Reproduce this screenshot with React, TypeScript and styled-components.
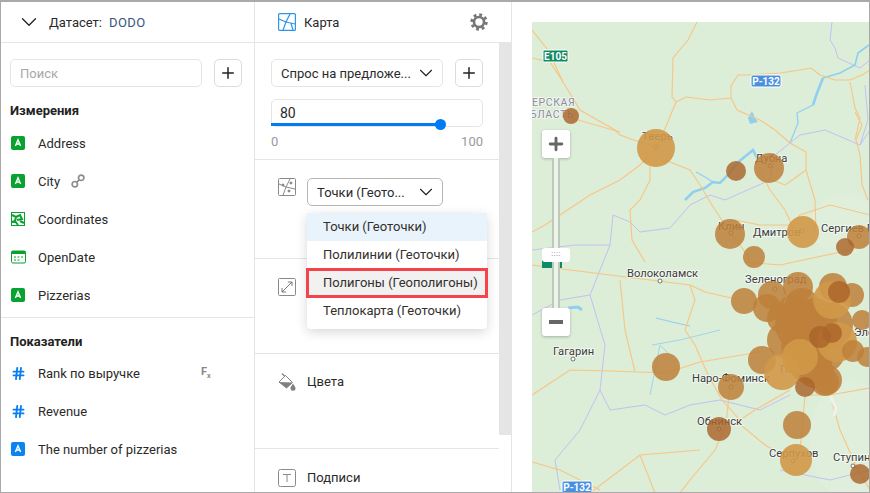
import styled, { createGlobalStyle } from 'styled-components';
import { ChevronDown, Plus, Hash } from 'lucide-react';

const GlobalStyle = createGlobalStyle`
  html, body {
    margin: 0;
    padding: 0;
    background: #fff;
  }
  * {
    box-sizing: border-box;
  }
`;

const roads = [
  'M656 148 L667 124 L676 102 L672 97 L673 58 L688 40 L697 22',
  'M676 102 L686 97 L710 100 L731 98 L731 86 L738 75 L752 75 L780 73 L800 70 L811 68 L820 75 L835 80 L850 80 L862 75 L870 70',
  'M731 98 L737 110 L760 120 L775 130 L790 143 L806 152 L806 170 L795 178 L785 185 L772 180',
  'M532 30 L548 50 L563 82 L571 95 L580 110 L615 130 L620 135 L656 148',
  'M532 58 L550 62 L563 82',
  'M571 118 L620 132',
  'M656 148 L640 165 L620 180 L590 195 L560 215 L545 225 L532 232',
  'M650 165 L650 180 L640 200 L630 210 L632 240 L645 262',
  'M665 160 L690 170 L700 185 L712 205 L725 225 L740 245 L754 265',
  'M850 82 L855 108 L860 118 L855 140',
  'M855 112 L862 125 L856 140 L860 155 L862 185 L868 200',
  'M806 170 L815 200 L816 232',
  'M760 170 L770 190 L785 210 L795 232',
  'M735 220 L760 225 L790 225 L800 215 L830 205 L870 215',
  'M532 265 L570 270 L610 275 L650 280 L690 285 L705 292 L740 300',
  'M620 280 L625 330 L635 372',
  'M532 395 L570 370 L610 371 L666 373 L700 362 L760 352',
  'M690 285 L695 300 L685 330 L695 345 L708 375 L722 400 L740 420 L755 410 L790 390',
  'M730 385 L726 425 L715 450 L690 480 L680 493',
  'M532 462 L560 470 L600 490',
  'M590 493 L640 455 L700 450',
  'M640 455 L655 493',
  'M735 420 L765 445 L790 460',
  'M805 395 L802 430 L800 450',
  'M830 395 L840 430 L858 470 L870 490',
  'M745 262 L780 265 L850 250 L870 240',
  'M805 395 L830 395 L870 388',
];

const borders = [
  'M832 22 L830 40 L835 48 L838 58 L860 68 L870 60',
  'M532 250 L575 245 L610 245 L613 215 L630 222 L640 232 L670 228 L690 205 L710 195 L725 200 L770 180 L775 155 L800 135 L825 130 L860 145 L870 130',
  'M865 85 L868 120 L860 145',
  'M610 245 L600 270 L590 295 L605 345 L600 390 L610 410 L645 405 L665 415 L690 405 L720 400 L760 410 L790 395',
  'M590 295 L560 300 L532 315',
  'M600 390 L580 430 L555 460 L560 490',
  'M780 470 L830 480 L870 470',
];

const rivers: [string, number][] = [
  ['M685 200 L693 192 L705 188 L713 182 L720 183 L730 173 L737 163 L747 155 L753 150 L757 158', 2.5],
  ['M696 172 L705 177 L713 182', 1.2],
  ['M869 45 L858 53 L855 65 L840 73 L823 78', 1.6],
  ['M823 78 L817 93 L813 105', 2.6],
  ['M813 105 L797 113 L798 123 L790 143', 1.2],
  ['M568 308 L578 307 L582 310', 3],
  ['M656 318 L672 322 L690 326', 1.2],
  ['M652 345 L680 340 L720 330', 0.8],
  ['M650 395 L660 345 L670 355', 0.8],
];

type Bubble = [number, number, number, string];

const LIGHT = 'rgba(208, 152, 72, 0.9)';
const MID = 'rgba(190, 128, 58, 0.86)';
const DARK = 'rgba(170, 100, 42, 0.82)';

const bubbles: Bubble[] = [
  [571, 116, 8, DARK],
  [656, 148, 19, LIGHT],
  [736, 171, 10, DARK],
  [769, 168, 15, MID],
  [730, 234, 15, MID],
  [803, 232, 16, LIGHT],
  [859, 237, 12, MID],
  [845, 247, 9, DARK],
  [754, 257, 11, MID],
  [744, 301, 13, MID],
  [767, 308, 14, MID],
  [772, 295, 14, MID],
  [798, 287, 15, MID],
  [833, 287, 14, MID],
  [852, 295, 12, MID],
  [862, 320, 10, MID],
  [795, 312, 18, MID],
  [802, 305, 17, MID],
  [785, 340, 18, MID],
  [830, 325, 23, MID],
  [810, 332, 24, MID],
  [800, 325, 25, MID],
  [815, 320, 22, MID],
  [782, 318, 15, MID],
  [825, 352, 20, MID],
  [805, 345, 24, MID],
  [815, 370, 18, MID],
  [810, 362, 22, MID],
  [805, 315, 12, MID],
  [762, 360, 14, MID],
  [782, 372, 18, LIGHT],
  [827, 380, 15, MID],
  [825, 382, 14, MID],
  [805, 387, 10, DARK],
  [800, 357, 18, LIGHT],
  [837, 342, 20, LIGHT],
  [820, 337, 11, DARK],
  [832, 333, 10, DARK],
  [832, 300, 19, LIGHT],
  [839, 292, 11, DARK],
  [853, 351, 11, MID],
  [867, 357, 10, MID],
  [666, 367, 14, MID],
  [731, 387, 13, MID],
  [719, 429, 12, DARK],
  [797, 425, 14, MID],
  [796, 460, 16, LIGHT],
  [860, 474, 10, DARK],
];

const placeDots = [
  [656, 147], [770, 166], [731, 233], [802, 231], [859, 236], [660, 281], [573, 359], [731, 387], [719, 429], [793, 461], [853, 466], [775, 289],
];

const mapLabels: [string, number, number, number?][] = [
  ['ЕРСКАЯ', 532, 106, 1],
  ['БЛАСТЬ', 530, 118, 1],
  ['Тверь', 642, 140],
  ['Дубна', 755, 162],
  ['Клин', 718, 230],
  ['Дмитров', 753, 236],
  ['Сергиев П', 821, 232],
  ['Волоколамск', 627, 277],
  ['Зеленоград', 745, 283],
  ['Гагарин', 553, 355],
  ['Наро-Фоминск', 692, 382],
  ['Обнинск', 697, 425],
  ['Серпухов', 769, 457],
  ['Ступин', 833, 461],
  ['По', 780, 373],
  ['Эле', 854, 336],
];

const MapDrawing = () => (
  <MapSvg viewBox="532 22 338 471">
    <rect x="532" y="22" width="338" height="471" fill="#dcedd8" />
    <ellipse cx="850" cy="440" rx="40" ry="60" fill="#e0efdc" />
    <ellipse cx="845" cy="225" rx="35" ry="30" fill="#e0efdc" />
    {borders.map(d => (
      <path key={d} d={d} fill="none" stroke="#c6bff3" strokeWidth="1" />
    ))}
    {rivers.map(([d, w]) => (
      <path key={d} d={d} fill="none" stroke="#8fcff0" strokeWidth={w} />
    ))}
    <path d="M748 118 L752 111 L755 118 L758 122 L750 124 Z" fill="#8fcff0" />
    {roads.map(d => (
      <path key={d} d={d} fill="none" stroke="#f8c583" strokeWidth="1.1" />
    ))}
    <path d="M830 396 L836 408 L834 416" fill="none" stroke="#eef3ea" strokeWidth="3" />
    <rect x="543" y="50" width="25" height="12" rx="1.5" fill="#0f8a64" stroke="#fff" strokeWidth="1" />
    <MapShield x="555.5" y="59.5">E105</MapShield>
    <rect x="751" y="75" width="30" height="12" rx="2" fill="#4a90e2" stroke="#fff" strokeWidth="1" />
    <MapShield x="766" y="84.5">Р-132</MapShield>
    <rect x="562" y="481" width="30" height="12" rx="2" fill="#4a90e2" stroke="#fff" strokeWidth="1" />
    <MapShield x="577" y="490.5">Р-132</MapShield>
    <rect x="542" y="260" width="20" height="8" fill="#0f8a64" />
    {mapLabels.map(([label, x, y, region]) => (
      <MapLabel key={label} x={x} y={y} $region={!!region}>
        {label}
      </MapLabel>
    ))}
    {placeDots.map(([x, y]) => (
      <circle key={`${x}-${y}`} cx={x} cy={y} r="2" fill="#fff" stroke="#555" strokeWidth="0.8" />
    ))}
    {bubbles.map(([x, y, r, fill]) => (
      <circle key={`${x}-${y}-${r}`} cx={x} cy={y} r={r} fill={fill} />
    ))}
  </MapSvg>
);

const TypeA = ({ color }: { color: string }) => (
  <svg width="14" height="14" viewBox="0 0 14 14">
    <rect width="14" height="14" rx="2" fill={color} />
    <path d="M4.4 10 L7 3.8 L9.6 10 M5.3 8 H8.7" fill="none" stroke="#fff" strokeWidth="1.4" />
  </svg>
);

const GeoIcon = () => (
  <svg width="14" height="14" viewBox="0 0 14 14" fill="none" stroke="#07a22f">
    <rect x="0.5" y="0.5" width="13" height="13" />
    <path d="M1 3 L5 5 L4 9 L1 10 M5 5 L9 3 L11 7 L6 8 M9 9 L13 11 M4 9 L7 13" strokeWidth="2" />
  </svg>
);

const DateIcon = () => (
  <svg width="15" height="14" viewBox="0 0 15 14" fill="none">
    <rect x="0.5" y="1" width="14" height="12" rx="1.5" stroke="#07a22f" />
    <rect x="0.5" y="1" width="14" height="3" fill="#07a22f" />
    <path d="M3 7 H5 M6.5 7 H8.5 M10 7 H12 M3 10 H5 M6.5 10 H8.5" stroke="#07a22f" strokeWidth="1.2" />
  </svg>
);

const ChainIcon = () => (
  <svg width="14" height="14" viewBox="0 0 14 14" fill="none" stroke="#8c8c8c" strokeWidth="1.7">
    <circle cx="3.8" cy="10.2" r="2.7" />
    <circle cx="10.2" cy="3.8" r="2.7" />
    <path d="M5.8 8.2 L8.2 5.8" />
  </svg>
);

const GearIcon = () => (
  <svg width="18" height="18" viewBox="0 0 18 18" fill="none" stroke="#777">
    <circle cx="9" cy="9" r="5" strokeWidth="2.6" />
    <circle cx="9" cy="9" r="7.2" strokeWidth="3" strokeDasharray="2.83 2.83" />
  </svg>
);

const MapChartIcon = () => (
  <svg width="18" height="18" viewBox="0 0 18 18" fill="none" stroke="#2d95ea" strokeWidth="1.2">
    <rect x="0.6" y="0.6" width="16.8" height="16.8" rx="1" />
    <path d="M1 6 L8 9 L12 1 M8 9 L5 17 M8 9 L17 11 M13 10.5 L15 17" />
  </svg>
);

const PointsIcon = () => (
  <svg width="18" height="18" viewBox="0 0 18 18" fill="none" stroke="#8a8a8a">
    <rect x="0.5" y="0.5" width="17" height="17" rx="1" />
    <path d="M1 6 L8 9 L12 1 M8 9 L5 17 M8 9 L17 11" />
    <circle cx="5" cy="7" r="1" fill="#666" />
    <circle cx="13" cy="5" r="1" fill="#666" />
    <circle cx="11" cy="13" r="1" fill="#666" />
  </svg>
);

const SizeIcon = () => (
  <svg width="18" height="18" viewBox="0 0 18 18" fill="none" stroke="#8a8a8a">
    <rect x="0.5" y="0.5" width="17" height="17" rx="1" />
    <path d="M4 14 L14 4 M10 4 H14 V8 M4 10 V14 H8" stroke="#777" />
  </svg>
);

const FillIcon = () => (
  <svg width="18" height="18" viewBox="0 0 18 18" fill="none">
    <path d="M4 0.5 L7.5 4" stroke="#808080" strokeWidth="1.2" />
    <path d="M7.5 2.5 L14.5 9.5 L8.5 15 L1 9 Z" stroke="#808080" fill="#fff" />
    <path d="M1 9 L14.5 9.5 L8.5 15 Z" fill="#808080" />
    <path d="M15 10.5 C15.8 12.5 17.5 13.5 17.5 15.3 A2.5 2.5 0 0 1 12.5 15.3 C12.5 13.5 14.2 12.5 15 10.5 Z" fill="#808080" />
  </svg>
);

const TextIcon = () => (
  <svg width="18" height="18" viewBox="0 0 18 18" fill="none" stroke="#8a8a8a">
    <rect x="0.5" y="0.5" width="17" height="17" rx="2" />
    <path d="M5 5.5 H13 M9 5.5 V13" />
  </svg>
);

const dimensions = [
  { name: 'Address', icon: <TypeA color="#07a22f" /> },
  { name: 'City', icon: <TypeA color="#07a22f" />, linked: true },
  { name: 'Coordinates', icon: <GeoIcon /> },
  { name: 'OpenDate', icon: <DateIcon /> },
  { name: 'Pizzerias', icon: <TypeA color="#07a22f" /> },
];

const hash = <Hash size={15} color="#0a7ff0" strokeWidth={3} />;

const measures = [
  { name: 'Rank по выручке', icon: hash, formula: true },
  { name: 'Revenue', icon: hash },
  { name: 'The number of pizzerias', icon: <TypeA color="#0a84f0" /> },
];

const chartTypes = [
  { label: 'Точки (Геоточки)', active: true },
  { label: 'Полилинии (Геоточки)' },
  { label: 'Полигоны (Геополигоны)', marked: true },
  { label: 'Теплокарта (Геоточки)' },
];

const App = () => {
  return (
    <>
      <GlobalStyle />
      <Frame>
        <LeftPanel>
          <PanelHeader $pad="15px">
            <ChevronDown size={26} color="#222" strokeWidth={1.2} />
            <DatasetLabel>Датасет:</DatasetLabel>
            <DatasetName>DODO</DatasetName>
          </PanelHeader>
          <SearchRow>
            <SearchInput>Поиск</SearchInput>
            <SquareButton>
              <Plus size={18} color="#222" strokeWidth={2} />
            </SquareButton>
          </SearchRow>
          <SectionTitle $after="4px">Измерения</SectionTitle>
          {dimensions.map(item => (
            <FieldRow key={item.name}>
              <FieldIcon>{item.icon}</FieldIcon>
              <span>{item.name}</span>
              {item.linked && (
                <LinkMark>
                  <ChainIcon />
                </LinkMark>
              )}
            </FieldRow>
          ))}
          <SectionDivider />
          <SectionTitle $after="3px">Показатели</SectionTitle>
          {measures.map(item => (
            <FieldRow key={item.name}>
              <FieldIcon>{item.icon}</FieldIcon>
              <span>{item.name}</span>
              {item.formula && (
                <FormulaMark>
                  F<sub>x</sub>
                </FormulaMark>
              )}
            </FieldRow>
          ))}
        </LeftPanel>

        <MiddlePanel>
          <PanelHeader $pad="23px">
            <MapChartIcon />
            <ChartName>Карта</ChartName>
            <GearSlot>
              <GearIcon />
            </GearSlot>
          </PanelHeader>
          <MiddleBody>
            <SettingsColumn>
              <LayerSection>
                <SelectRow>
                  <SelectBox $width="172px">
                    <span>Спрос на предложе...</span>
                    <SelectArrow>
                      <ChevronDown size={22} color="#222" strokeWidth={1.2} />
                    </SelectArrow>
                  </SelectBox>
                  <SquareButton>
                    <Plus size={18} color="#222" strokeWidth={2} />
                  </SquareButton>
                </SelectRow>
                <OpacityInput>
                  80
                  <SliderTrack>
                    <SliderFill style={{ width: '80%' }} />
                    <SliderKnob />
                  </SliderTrack>
                </OpacityInput>
                <SliderScale>
                  <span>0</span>
                  <span>100</span>
                </SliderScale>
              </LayerSection>

              <SettingSection $height="99px" $top="18px">
                <SettingIcon>
                  <PointsIcon />
                </SettingIcon>
                <SelectBox $width="136px" $strong>
                  <span>Точки (Геото...</span>
                  <SelectArrow>
                    <ChevronDown size={22} color="#222" strokeWidth={1.2} />
                  </SelectArrow>
                </SelectBox>
                <Dropdown>
                  {chartTypes.map(type => (
                    <DropdownItem key={type.label} $active={type.active} $marked={type.marked}>
                      {type.label}
                    </DropdownItem>
                  ))}
                </Dropdown>
              </SettingSection>

              <SettingSection $height="95px" $top="19px">
                <SettingIcon>
                  <SizeIcon />
                </SettingIcon>
              </SettingSection>

              <SettingSection $height="95px" $top="19px">
                <SettingIcon>
                  <FillIcon />
                </SettingIcon>
                <SettingName>Цвета</SettingName>
              </SettingSection>

              <SettingSection $height="60px" $top="20px" $last>
                <SettingIcon>
                  <TextIcon />
                </SettingIcon>
                <SettingName>Подписи</SettingName>
              </SettingSection>
            </SettingsColumn>
            <ScrollTrack />
          </MiddleBody>
        </MiddlePanel>

        <MapPanel>
          <MapFrame>
            <MapDrawing />
            <ZoomControl>
              <ZoomButton>
                <Plus size={20} color="#666" strokeWidth={3.4} />
              </ZoomButton>
              <ZoomRail>
                <ZoomHandle>::::</ZoomHandle>
              </ZoomRail>
              <ZoomButton>
                <MinusBar />
              </ZoomButton>
            </ZoomControl>
          </MapFrame>
        </MapPanel>
      </Frame>
    </>
  );
};

const Frame = styled.div`
  display: flex;
  width: 870px;
  height: 493px;
  overflow: hidden;
  background: #fff;
  border: 1px solid #a9a9a9;
  border-top-width: 2px;
  font-family: Roboto, 'Liberation Sans', sans-serif;
  font-size: 13px;
  color: #2a2a2a;
`;

const LeftPanel = styled.div`
  flex: none;
  width: 254px;
  border-right: 1px solid #e5e5e5;
`;

const PanelHeader = styled.div<{ $pad: string }>`
  display: flex;
  align-items: center;
  height: 41px;
  padding-left: ${props => props.$pad};
  border-bottom: 1px solid #e5e5e5;
`;

const DatasetLabel = styled.span`
  margin-left: 7px;
`;

const DatasetName = styled.span`
  margin-left: 7px;
  letter-spacing: 0.4px;
  color: #33577f;
`;

const SearchRow = styled.div`
  display: flex;
  justify-content: space-between;
  padding: 16px 12px 0 9px;
`;

const SearchInput = styled.div`
  width: 192px;
  height: 28px;
  padding-left: 9px;
  line-height: 27px;
  color: #a8a8a8;
  border: 1px solid #e5e5e5;
  border-radius: 5px;
`;

const SquareButton = styled.div`
  display: flex;
  align-items: center;
  justify-content: center;
  width: 28px;
  height: 28px;
  border: 1px solid #dcdcdc;
  border-radius: 5px;
`;

const SectionTitle = styled.div<{ $after: string }>`
  height: 18px;
  margin: 15px 0 ${props => props.$after};
  padding-left: 9px;
  line-height: 18px;
  font-weight: 700;
  color: #222;
`;

const FieldRow = styled.div`
  position: relative;
  display: flex;
  align-items: center;
  height: 38px;
  padding-left: 10px;
`;

const FieldIcon = styled.span`
  display: flex;
  align-items: center;
  justify-content: flex-start;
  width: 27px;
  flex: none;
`;

const LinkMark = styled.span`
  display: flex;
  margin-left: 11px;
`;

const FormulaMark = styled.span`
  position: absolute;
  left: 200px;
  font-size: 11px;
  font-weight: 700;
  color: #888;
  sub {
    font-size: 7px;
  }
`;

const SectionDivider = styled.div`
  height: 1px;
  margin-top: 3px;
  background: #e5e5e5;
`;

const MiddlePanel = styled.div`
  flex: none;
  display: flex;
  flex-direction: column;
  width: 257px;
  border-right: 1px solid #e5e5e5;
`;

const ChartName = styled.span`
  margin-left: 8px;
`;

const GearSlot = styled.span`
  display: flex;
  margin-left: auto;
  margin-right: 23px;
`;

const MiddleBody = styled.div`
  flex: 1;
  display: flex;
  min-height: 0;
`;

const SettingsColumn = styled.div`
  flex: 1;
  min-width: 0;
`;

const ScrollTrack = styled.div`
  flex: none;
  width: 12px;
  height: 392px;
  background: #e5e5e5;
`;

const LayerSection = styled.div`
  height: 117px;
  padding: 16px 16px 0;
  border-bottom: 1px solid #e5e5e5;
`;

const SelectRow = styled.div`
  display: flex;
  justify-content: space-between;
`;

const SelectBox = styled.div<{ $width: string; $strong?: boolean }>`
  display: flex;
  align-items: center;
  justify-content: space-between;
  width: ${props => props.$width};
  height: 28px;
  padding: 0 9px;
  white-space: nowrap;
  border: 1px solid ${props => (props.$strong ? '#b5b5b5' : '#e5e5e5')};
  border-radius: 5px;
`;

const SelectArrow = styled.span`
  display: flex;
  margin-right: -4px;
`;

const OpacityInput = styled.div`
  position: relative;
  height: 28px;
  margin-top: 12px;
  padding-left: 8px;
  line-height: 26px;
  font-size: 14px;
  border: 1px solid #e5e5e5;
  border-radius: 5px;
`;

const SliderTrack = styled.div`
  position: absolute;
  left: -1px;
  right: -1px;
  bottom: 0;
  height: 3px;
`;

const SliderFill = styled.div`
  height: 100%;
  background: #027bf3;
`;

const SliderKnob = styled.div`
  position: absolute;
  left: calc(80% - 5.5px);
  top: -4px;
  width: 11px;
  height: 11px;
  border-radius: 50%;
  background: #027bf3;
`;

const SliderScale = styled.div`
  display: flex;
  justify-content: space-between;
  margin-top: 7px;
  color: #9a9a9a;
  font-size: 13px;
`;

const SettingSection = styled.div<{ $height: string; $top: string; $last?: boolean }>`
  position: relative;
  display: flex;
  align-items: flex-start;
  height: ${props => props.$height};
  padding: ${props => props.$top} 0 0 23px;
  border-bottom: ${props => (props.$last ? 'none' : '1px solid #e5e5e5')};
`;

const SettingIcon = styled.span`
  display: flex;
  flex: none;
  width: 29px;
`;

const SettingName = styled.span`
  line-height: 18px;
`;

const Dropdown = styled.div`
  position: absolute;
  z-index: 2;
  left: 52px;
  top: 53px;
  width: 180px;
  padding-bottom: 4px;
  background: #fff;
  border-radius: 4px;
  box-shadow: 0 3px 12px rgba(0, 0, 0, 0.16);
`;

const DropdownItem = styled.div<{ $active?: boolean; $marked?: boolean }>`
  height: 28px;
  padding-left: 16px;
  line-height: 28px;
  white-space: nowrap;
  color: #33302b;
  background: ${props => (props.$active ? '#e9f3fb' : props.$marked ? '#f1f1f1' : 'transparent')};
  outline: ${props => (props.$marked ? '3px solid #f4444a' : 'none')};
  outline-offset: -2px;
`;

const MapPanel = styled.div`
  flex: 1;
  min-width: 0;
  padding: 20px 0 0 20px;
`;

const MapFrame = styled.div`
  position: relative;
  height: 100%;
  overflow: hidden;
`;

const MapSvg = styled.svg`
  display: block;
  width: 338px;
  height: 471px;
`;

const MapLabel = styled.text<{ $region?: boolean }>`
  font-family: Roboto, sans-serif;
  font-size: ${props => (props.$region ? '10.5px' : '11.2px')};
  letter-spacing: ${props => (props.$region ? '0.6px' : '0')};
  fill: ${props => (props.$region ? '#8f8aa0' : '#3d3d3d')};
  stroke: rgba(255, 255, 255, 0.6);
  stroke-width: 2px;
  paint-order: stroke;
`;

const MapShield = styled.text`
  font-family: Roboto, sans-serif;
  font-size: 10px;
  font-weight: 700;
  fill: #fff;
  text-anchor: middle;
`;

const ZoomControl = styled.div`
  position: absolute;
  left: 10px;
  top: 108px;
  display: flex;
  flex-direction: column;
  align-items: center;
  width: 28px;
`;

const ZoomButton = styled.div`
  display: flex;
  align-items: center;
  justify-content: center;
  width: 28px;
  height: 28px;
  background: #fff;
  border-radius: 3px;
  box-shadow: 0 1px 3px rgba(0, 0, 0, 0.25);
`;

const ZoomRail = styled.div`
  position: relative;
  width: 8px;
  height: 150px;
  background: #eef3ea;
  border-left: 2px solid #bccabb;
  border-right: 2px solid #bccabb;
`;

const ZoomHandle = styled.div`
  position: absolute;
  left: -12px;
  top: 90px;
  width: 28px;
  height: 14px;
  background: #fff;
  border-radius: 3px;
  font-size: 8px;
  line-height: 12px;
  letter-spacing: 0.5px;
  text-align: center;
  color: #777;
`;

const MinusBar = styled.div`
  width: 14px;
  height: 4px;
  background: #666;
`;

export default App;
